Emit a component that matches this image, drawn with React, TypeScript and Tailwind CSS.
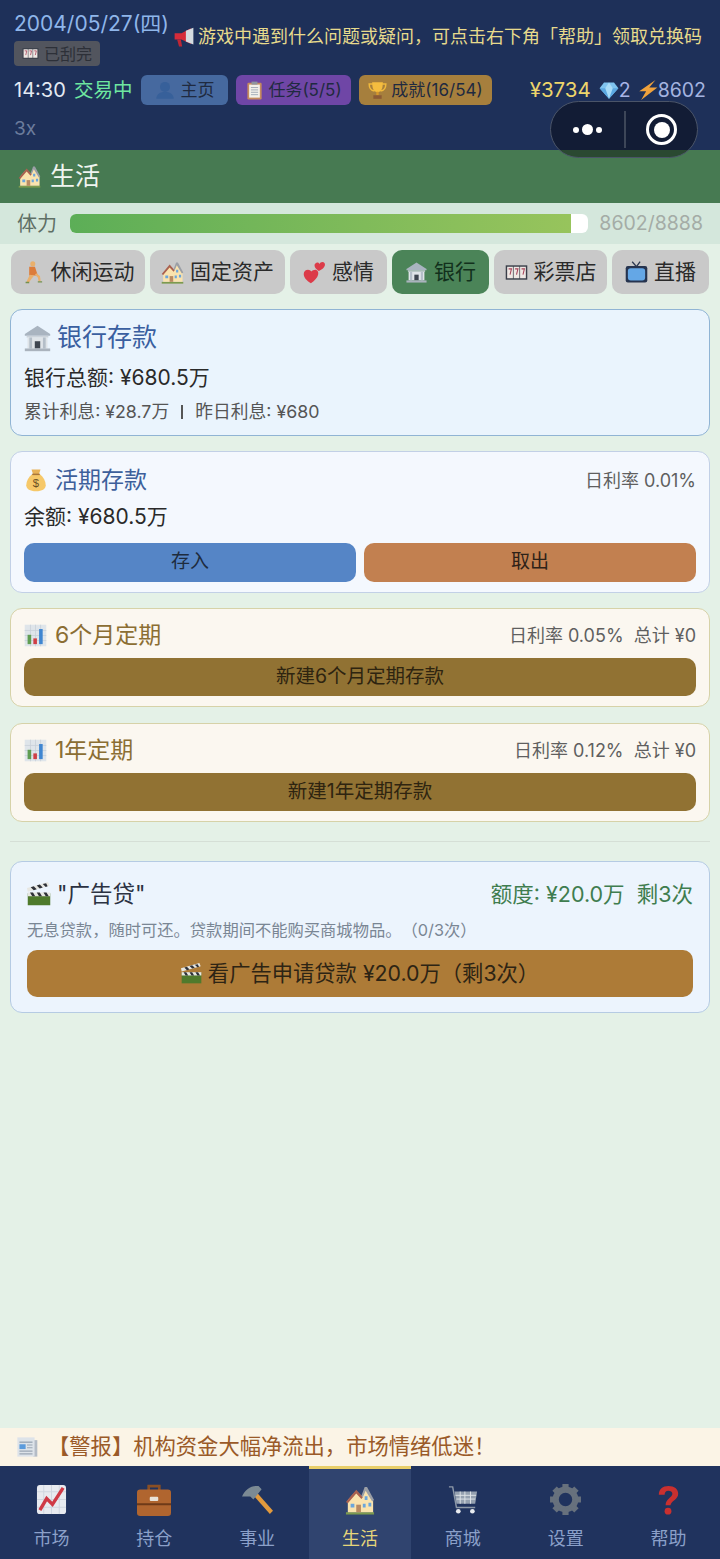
type IconProps = { className?: string };

const House = ({ className }: IconProps) => (
    <svg viewBox="0 0 32 32" className={className}>
        <path d="M1 29h30v2.500H1z" fill="#7c9a4e" />
        <path d="M3 16L12 6l6 6 4-9 8 14v12H3z" fill="#fae3ae" />
        <path d="M1 18L12 5l7 8-1.500 2L12 9l-9 10.500z" fill="#a9604f" />
        <path d="M21 2h2.500L31 16l-2 1.500L22 6l-3 7-1.500-1.500z" fill="#9b9fa6" />
        <path d="M6 20h4v4H6zM21 12h3v4h-3zM25 19h3v4h-3zM19 20h3v4h-3z" fill="#6aa6dc" />
        <path d="M12 21h5v8h-5z" fill="#b98a62" />
    </svg>
);

const Bank = ({ className }: IconProps) => (
    <svg viewBox="0 0 32 32" className={className}>
        <path d="M16 2L2 11v2h28v-2z" fill="#a9b4c0" />
        <path d="M4 13h24v2H4z" fill="#ccd3da" />
        <path d="M5 15h22v12H5z" fill="#dfe4e8" />
        <path d="M7 15h3v12H7zM22 15h3v12h-3z" fill="#b4bec8" />
        <path d="M13 19h6v8h-6z" fill="#3e4650" />
        <path d="M2 27h28v3H2z" fill="#aab3bd" />
    </svg>
);

const MoneyBag = ({ className }: IconProps) => (
    <svg viewBox="0 0 32 32" className={className}>
        <path d="M11 8C6 12 3 18 3 23c0 5 5 8 13 8s13-3 13-8c0-5-3-11-8-15z" fill="#f6c869" />
        <path d="M10 2h12l-2 6h-8z" fill="#e8b257" />
        <path d="M11 7.500h10v2H11z" fill="#a8763a" />
        <text x="16" y="25" textAnchor="middle" fontSize="15" fontFamily="Liberation Sans, sans-serif" fill="#6b5024">$</text>
    </svg>
);

const BarChart = ({ className }: IconProps) => (
    <svg viewBox="0 0 32 32" className={className}>
        <path d="M1 1h30v30H1z" fill="#dfe5ea" />
        <path d="M1 9h30M1 16h30M1 23h30M9 1v30M16 1v30M23 1v30" stroke="#c6ced6" strokeWidth="1" />
        <path d="M5 15h5v13H5z" fill="#5f9d52" />
        <path d="M13 20h5v8h-5z" fill="#cf3f46" />
        <path d="M21 7h5v21h-5z" fill="#3f86d1" />
    </svg>
);

const Clapper = ({ className }: IconProps) => (
    <svg viewBox="0 0 32 32" className={className}>
        <path d="M1 15h30v16H1z" fill="#4f7a2c" />
        <path d="M1 13L30 5l-2-5L0 8z" fill="#e7e7e2" />
        <path d="M5 7l4 4 4-1.200-4-4zM13 4.500l4 4 4-1.200-4-4zM21 2.500l4 4 2.500-.7-2-4z" fill="#2e3138" />
        <path d="M1 14h30v5H1z" fill="#e7e7e2" />
        <path d="M4 14l3 5h4l-3-5zM13 14l3 5h4l-3-5zM22 14l3 5h4l-3-5z" fill="#2e3138" />
    </svg>
);

const Runner = ({ className }: IconProps) => (
    <svg viewBox="0 0 32 32" className={className}>
        <circle cx="15" cy="4" r="3.500" fill="#e9b06c" />
        <path d="M10 8h8l4 12H10z" fill="#dc7c3a" />
        <path d="M11 19l-3 6-2 5 3 1 4-6 4-5z" fill="#e9b06c" />
        <path d="M18 19l4 4 1 5 3 0-1-7-5-4z" fill="#e9b06c" />
        <path d="M5 29h5v2H5zM22 28h6v2h-6z" fill="#74914d" />
    </svg>
);

const Hearts = ({ className }: IconProps) => (
    <svg viewBox="0 0 32 32" className={className}>
        <path d="M22 14c-4-3-6-5-6-8 0-2 2-4 4-4 1.500 0 2.500 1 3 2 1-1.500 2-2.500 4-2.500 2.500 0 4 2 3.500 4.500-.5 3-4 6-8.500 8z" fill="#dc3b49" />
        <path d="M11 31C5 27 1 23 1 18c0-4 3-6 6-6 2 0 3.500 1 4.500 2.500C13 13 15 12 17 12c3 0 5 3 4 7-1 4-4.500 8-10 12z" fill="#dc3b49" />
    </svg>
);

const Slots = ({ className }: IconProps) => (
    <svg viewBox="0 0 32 32" className={className}>
        <path d="M1 6h30v20H1z" fill="#3a3f4a" />
        <path d="M3 8h8v16H3zM12 8h8v16h-8zM21 8h8v16h-8z" fill="#efe8e4" />
        <path d="M5 11h4l-2 8M14 11h4l-2 8M23 11h4l-2 8" fill="none" stroke="#a8445a" strokeWidth="1.500" />
    </svg>
);

const Tv = ({ className }: IconProps) => (
    <svg viewBox="0 0 32 32" className={className}>
        <path d="M10 1l6 7 5-7" fill="none" stroke="#2c3850" strokeWidth="1.800" />
        <rect x="1" y="7" width="30" height="23" rx="3" fill="#26344f" />
        <rect x="4" y="10" width="24" height="17" rx="4" fill="#64a7e6" />
    </svg>
);

const Person = ({ className }: IconProps) => (
    <svg viewBox="0 0 32 32" className={className}>
        <circle cx="16" cy="11" r="8" fill="#37609a" />
        <path d="M2 30c0-8 7-11 14-11s14 3 14 11z" fill="#37609a" />
    </svg>
);

const Clipboard = ({ className }: IconProps) => (
    <svg viewBox="0 0 32 32" className={className}>
        <rect x="4" y="3" width="24" height="28" rx="2" fill="#c58b5e" />
        <path d="M7 6h18v22H7z" fill="#f3f1ea" />
        <path d="M10 11h12M10 15h12M10 19h12M10 23h12" stroke="#9ba5b3" strokeWidth="1.500" />
        <path d="M11 1h10v5H11z" fill="#8e959f" />
    </svg>
);

const Trophy = ({ className }: IconProps) => (
    <svg viewBox="0 0 32 32" className={className}>
        <path d="M8 5H2c0 7 3 11 9 12M24 5h6c0 7-3 11-9 12" fill="none" stroke="#f0b93c" strokeWidth="2.500" />
        <path d="M7 2h18c0 10-2 16-9 17C9 18 7 12 7 2z" fill="#f4bd3f" />
        <path d="M14 18h4v6h-4z" fill="#d8982c" />
        <path d="M9 24h14v6H9z" fill="#8c5a34" />
    </svg>
);

const Megaphone = ({ className }: IconProps) => (
    <svg viewBox="0 0 32 32" className={className}>
        <path d="M1 10h11l15-8v25l-15-7H1z" fill="#d62b3a" />
        <path d="M19 6l12-5v27l-12-5z" fill="#d5dbe0" />
        <path d="M5 20h6l2 11H8z" fill="#c02635" />
    </svg>
);

const Gem = ({ className }: IconProps) => (
    <svg viewBox="0 0 32 32" className={className}>
        <path d="M8 4h16l7 9-15 17L1 13z" fill="#7fc4f0" />
        <path d="M1 13h30L16 30z" fill="#5ba8e2" />
        <path d="M10 13l6-9 6 9-6 17z" fill="#a8dcf8" />
    </svg>
);

const Bolt = ({ className }: IconProps) => (
    <svg viewBox="0 0 32 32" className={className}>
        <path d="M28 0L2 18h11L5 32l26-20H18z" fill="#f0a23c" />
    </svg>
);

const Newspaper = ({ className }: IconProps) => (
    <svg viewBox="0 0 32 32" className={className}>
        <path d="M25 6h6v24h-6z" fill="#b4bcc6" />
        <path d="M2 2h25v28H2z" fill="#dde3e9" />
        <path d="M5 8h19v2H5z" fill="#9aa6b4" />
        <path d="M5 12h9v7H5z" fill="#5b9bdc" />
        <path d="M16 13h8M16 17h8M5 22h19M5 26h19" stroke="#9aa6b4" strokeWidth="1.500" />
    </svg>
);

const MarketIcon = ({ className }: IconProps) => (
    <svg viewBox="0 0 32 32" className={className}>
        <rect x="1" y="1" width="30" height="30" rx="3" fill="#e8ebf0" />
        <path d="M1 8h30M1 16h30M1 24h30M8 1v30M16 1v30M24 1v30" stroke="#cfd6df" strokeWidth="1" />
        <path d="M4 27l7-12 6 6L28 4" fill="none" stroke="#cf3a46" strokeWidth="3.500" />
    </svg>
);

const Briefcase = ({ className }: IconProps) => (
    <svg viewBox="0 0 32 32" className={className}>
        <path d="M11 7V3h10v4" fill="none" stroke="#8a4f24" strokeWidth="2.500" />
        <rect x="0" y="6" width="32" height="25" rx="3" fill="#b0652f" />
        <path d="M0 19h32v2H0z" fill="#6e3a18" />
        <rect x="12" y="13" width="8" height="4" rx="1" fill="#e8e2d8" />
    </svg>
);

const Hammer = ({ className }: IconProps) => (
    <svg viewBox="0 0 32 32" className={className}>
        <path d="M13 13l3-3 15 17-3 3z" fill="#e29a3d" />
        <path d="M1 13C4 6 10 2 17 3l3 3-8 10-3-3c-3 0-5 0-8 0z" fill="#7b8a94" />
    </svg>
);

const Cart = ({ className }: IconProps) => (
    <svg viewBox="0 0 32 32" className={className}>
        <path d="M1 2h4l4 22h20" fill="none" stroke="#8d99a8" strokeWidth="1.500" />
        <path d="M7 7h24l-2 13H9z" fill="#95a1b0" />
        <path d="M8 11h22M9 15h20M13 7v13M18 7v13M24 7v13" stroke="#e1e5ea" strokeWidth="1" />
        <circle cx="11" cy="28" r="2.500" fill="#e8ebef" />
        <circle cx="26" cy="28" r="2.500" fill="#e8ebef" />
    </svg>
);

const Gear = ({ className }: IconProps) => (
    <svg viewBox="0 0 32 32" className={className}>
        <circle cx="16" cy="16" r="9.500" fill="none" stroke="#67717d" strokeWidth="6" />
        <path d="M16 1v30M1 16h30M5.400 5.400l21.200 21.200M26.600 5.400L5.400 26.600" stroke="#67717d" strokeWidth="6" strokeDasharray="6 18 6" />
    </svg>
);

const Question = ({ className }: IconProps) => (
    <svg viewBox="0 0 32 32" className={className}>
        <path d="M6 11c0-6 4-9 10-9s10 3 10 8c0 6-7 7-8 12h-5c0-7 7-8 7-12 0-2-2-3-4-3-3 0-4 2-4 4z" fill="#c9302f" />
        <circle cx="15.500" cy="28" r="3.500" fill="#c9302f" />
    </svg>
);

const tabs = [
    { label: '休闲运动', Icon: Runner, width: 'w-[134px]' },
    { label: '固定资产', Icon: House, width: 'w-[135px]' },
    { label: '感情', Icon: Hearts, width: 'w-[97px]' },
    { label: '银行', Icon: Bank, width: 'w-[97px]', active: true },
    { label: '彩票店', Icon: Slots, width: 'w-[113px]' },
    { label: '直播', Icon: Tv, width: 'w-[97px]' },
];

const navItems = [
    { label: '市场', Icon: MarketIcon, size: 'w-[31px] h-[31px]' },
    { label: '持仓', Icon: Briefcase, size: 'w-[34px] h-[34px]' },
    { label: '事业', Icon: Hammer, size: 'w-[33px] h-[33px]' },
    { label: '生活', Icon: House, size: 'w-[30px] h-[30px]', active: true },
    { label: '商城', Icon: Cart, size: 'w-[30px] h-[30px]' },
    { label: '设置', Icon: Gear, size: 'w-[33px] h-[33px]' },
    { label: '帮助', Icon: Question, size: 'w-[31px] h-[31px]' },
];

const Chip = ({ children, className }: { children: React.ReactNode; className: string }) => (
    <div className={`flex h-[30px] items-center justify-center gap-1 rounded-md text-[17px] text-[#1f2a40] ${className}`}>{children}</div>
);

const FixedCard = ({ title, rate, action }: { title: string; rate: string; action: string }) => (
    <div className="rounded-xl border-[1.5px] border-[#d6d2a8] bg-[#fbf7f0] px-[13px] pt-[12px] pb-[10px]">
        <div className="flex h-[29px] items-center">
            <BarChart className="mr-[8px] h-[23px] w-[23px]" />
            <span className="text-[23px] text-[#8b6e33]">{title}</span>
            <span className="ml-auto text-[18px] whitespace-pre text-[#5f5f5f]">{rate}</span>
        </div>
        <button className="mt-[8px] h-[38px] w-full rounded-[10px] bg-[#917233] text-[19.5px] text-[#2e2410]">{action}</button>
    </div>
);

export default function App() {
    return (
        <div
            className="relative flex h-[1559px] w-[720px] flex-col overflow-hidden bg-[#e4f1e7] [text-spacing-trim:space-all]"
            style={{ fontFamily: 'Inter, "Noto Sans CJK SC", sans-serif' }}
        >
            {/* top bar */}
            <div className="h-[150px] shrink-0 bg-[#1e3059] px-[14px] pt-[9px]">
                <div className="flex items-start">
                    <div>
                        <div className="h-[30px] w-[153px] whitespace-nowrap text-[21px] leading-[30px] text-[#8fb6ea]">2004/05/27(四)</div>
                        <div className="mt-[2px] flex h-[25px] w-[86px] items-center gap-[5px] rounded bg-[#52555e] pl-[8px] text-[16px] text-[#2d3038]">
                            <Slots className="h-[17px] w-[17px]" />
                            已刮完
                        </div>
                    </div>
                    <div className="ml-[7px] mt-[16px] flex items-center gap-[4px] text-[18px] leading-[24px] whitespace-nowrap text-[#e7da8c]">
                        <Megaphone className="h-[20px] w-[20px]" />
                        游戏中遇到什么问题或疑问，可点击右下角「帮助」领取兑换码
                    </div>
                </div>
                <div className="mt-[9px] flex items-center">
                    <span className="w-[60px] text-[20px] text-[#e4eaf3]">14:30</span>
                    <span className="w-[67px] text-[19.5px] text-[#6ee7a0]">交易中</span>
                    <Chip className="w-[87px] bg-[#46699f]">
                        <Person className="h-[20px] w-[20px]" />
                        <span className="ml-[2px]">主页</span>
                    </Chip>
                    <Chip className="ml-[8px] w-[115px] bg-[#6f46a6]">
                        <Clipboard className="h-[19px] w-[19px]" />
                        任务(5/5)
                    </Chip>
                    <Chip className="ml-[8px] w-[133px] bg-[#a67f3d]">
                        <Trophy className="h-[19px] w-[19px]" />
                        成就(16/54)
                    </Chip>
                    <div className="ml-auto flex items-center text-[19.5px]">
                        <span className="text-[20.5px] text-[#edd56b]">¥3734</span>
                        <Gem className="ml-[8px] h-[20px] w-[20px]" />
                        <span className="text-[#a9b4e6]">2</span>
                        <Bolt className="ml-[7px] h-[20px] w-[20px]" />
                        <span className="text-[#a4b4e0]">8602</span>
                    </div>
                </div>
                <div className="mt-[8px] text-[19px] leading-[30px] text-[#6c7c9c]">3x</div>
            </div>

            {/* section title */}
            <div className="flex h-[53px] shrink-0 items-center gap-[9px] bg-[#477a52] pl-[18px] text-[25px] text-[#f0f5f0]">
                <House className="h-[23px] w-[23px]" />
                生活
            </div>

            {/* stamina */}
            <div className="flex h-[41px] shrink-0 items-center bg-[#d4e7dc] pl-[17px] pr-[17px]">
                <span className="w-[53px] text-[20px] text-[#5f6f65]">体力</span>
                <div className="h-[19px] w-[518px] overflow-hidden rounded-md bg-white">
                    <div className="h-full w-[501px] bg-gradient-to-r from-[#5cae57] to-[#97c45c]" />
                </div>
                <span className="ml-auto text-[19.5px] text-[#a4aca6]">8602/8888</span>
            </div>

            {/* tabs */}
            <div className="mt-[6px] flex shrink-0 gap-[5px] px-[11px]">
                {tabs.map(({ label, Icon, width, active }) => (
                    <div
                        key={label}
                        className={`flex h-[44px] items-center justify-center gap-[6px] rounded-[10px] text-[21px] ${width} ${active ? 'bg-[#4b8458] text-[#12301c]' : 'bg-[#c9c9c9] text-[#2a2a2a]'}`}
                    >
                        <Icon className="h-[23px] w-[23px]" />
                        {label}
                    </div>
                ))}
            </div>

            {/* content */}
            <div className="flex flex-1 flex-col px-[10px] pt-[15px]">
                <div className="h-[127px] rounded-xl border-[1.5px] border-[#90b4d4] bg-[#eaf4fd] px-[13px] pt-[12px]">
                    <div className="flex h-[32px] items-center gap-[5px]">
                        <Bank className="-ml-[1px] h-[29px] w-[29px]" />
                        <span className="text-[25px] text-[#3a5fa0]">银行存款</span>
                    </div>
                    <div className="mt-[9px] text-[21px] leading-[30px] text-[#2a2a2a]">银行总额: ¥680.5万</div>
                    <div className="mt-[7px] flex items-center text-[17.8px] leading-[24px] text-[#555]">
                        累计利息: ¥28.7万
                        <span className="mx-[12px] h-[14px] w-[2px] bg-[#555]" />
                        昨日利息: ¥680
                    </div>
                </div>

                <div className="mt-[15px] h-[142px] rounded-xl border-[1.5px] border-[#c2d0e6] bg-[#f4f8fe] px-[13px] pt-[12px]">
                    <div className="flex h-[32px] items-center">
                        <MoneyBag className="mr-[7px] h-[24px] w-[24px]" />
                        <span className="text-[23px] text-[#3d5f9b]">活期存款</span>
                        <span className="ml-auto text-[18px] text-[#5f5f5f]">日利率 0.01%</span>
                    </div>
                    <div className="mt-[6px] text-[21px] leading-[30px] text-[#2a2a2a]">余额: ¥680.5万</div>
                    <div className="mt-[11px] flex gap-2">
                        <button className="h-[39px] flex-1 rounded-[10px] bg-[#5585c6] text-[19px] text-[#1e2c3e]">存入</button>
                        <button className="h-[39px] flex-1 rounded-[10px] bg-[#c28050] text-[19px] text-[#2e2218]">取出</button>
                    </div>
                </div>

                <div className="mt-[15px] flex flex-col gap-[16px]">
                    <FixedCard title="6个月定期" rate="日利率 0.05%  总计 ¥0" action="新建6个月定期存款" />
                    <FixedCard title="1年定期" rate="日利率 0.12%  总计 ¥0" action="新建1年定期存款" />
                </div>

                <div className="mt-[19px] h-px bg-[#d5dfd6]" />

                <div className="mt-[19px] h-[152px] rounded-xl border-[1.5px] border-[#b5cbe3] bg-[#ecf4fd] px-[16px] pt-[16px]">
                    <div className="flex h-[32px] items-center">
                        <Clapper className="mr-[6px] h-[24px] w-[24px]" />
                        <span className="text-[22.5px] text-[#2b3242]">"广告贷"</span>
                        <span className="ml-auto text-[21.5px] text-[#3f7d4f]">额度: ¥20.0万 &nbsp;剩3次</span>
                    </div>
                    <div className="mt-[8px] text-[16.3px] leading-[24px] text-[#7a8694]">无息贷款，随时可还。贷款期间不能购买商城物品。（0/3次）</div>
                    <button className="mt-[8px] flex h-[47px] w-full items-center justify-center gap-[6px] rounded-[10px] bg-[#ad7b37] text-[21.3px] text-[#2d2414]">
                        <Clapper className="h-[21px] w-[21px]" />
                        看广告申请贷款 ¥20.0万（剩3次）
                    </button>
                </div>
            </div>

            {/* news ticker */}
            <div className="flex h-[38px] shrink-0 items-center bg-[#fbf4e6] pl-[16px] text-[21.3px] text-[#9a5a28]">
                <Newspaper className="mr-[10px] h-[22px] w-[22px]" />
                【警报】机构资金大幅净流出，市场情绪低迷！
            </div>

            {/* bottom nav */}
            <div className="grid h-[93px] shrink-0 grid-cols-7 bg-[#20335e]">
                {navItems.map(({ label, Icon, size, active }) => (
                    <div key={label} className={`flex flex-col items-center ${active ? 'border-t-[3px] border-[#e9cf6a] bg-[#30446f] text-[#e6d67a]' : 'border-t-[3px] border-transparent text-[#8ba0c9]'}`}>
                        <div className="flex h-[47px] items-center pt-[14px]">
                            <Icon className={size} />
                        </div>
                        <span className="mt-[11px] text-[18px] leading-[24px]">{label}</span>
                    </div>
                ))}
            </div>

            {/* mini program capsule */}
            <div className="absolute left-[550px] top-[101px] flex h-[57px] w-[148px] items-center rounded-full border border-[#4a5468] bg-black/40">
                <div className="flex w-[73px] items-center justify-center gap-[3px]">
                    <span className="h-[6px] w-[6px] rounded-full bg-white" />
                    <span className="h-[11px] w-[11px] rounded-full bg-white" />
                    <span className="h-[6px] w-[6px] rounded-full bg-white" />
                </div>
                <div className="h-[37px] w-[2px] bg-[#3d4658]" />
                <div className="flex flex-1 items-center justify-center">
                    <div className="flex h-[31px] w-[31px] items-center justify-center rounded-full border-[3.5px] border-white">
                        <span className="h-[16px] w-[16px] rounded-full bg-white" />
                    </div>
                </div>
            </div>
        </div>
    );
}
